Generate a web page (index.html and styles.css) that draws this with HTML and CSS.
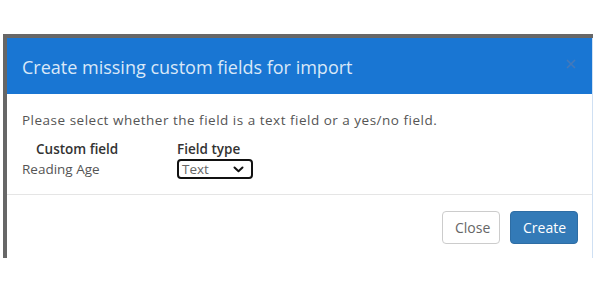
FILE: index.html
```html
<!DOCTYPE html>
<html>
	<head>
		<meta charset="utf-8"/>
		<title>Create missing custom fields</title>
		<link rel="stylesheet" href="styles.css">
	</head>
	<body>
		<div class="backdrop">
			<div class="modal">
				<div class="modalHeader">
					<h4 class="modalTitle">Create missing custom fields for import</h4>
					<svg class="closeX" width="10" height="10" viewBox="0 0 10 10"><path d="M1 1 L9 9 M9 1 L1 9" fill="none" stroke="#4479ba" stroke-width="1.6"/></svg>
				</div>
				<div class="modalBody">
					<p class="intro">Please select whether the field is a text field or a yes/no field.</p>
					<div class="fieldTable">
						<div class="colHead colName">Custom field</div>
						<div class="colHead">Field type</div>
						<div class="fieldName">Reading Age</div>
						<div class="selectBox">
							<span>Text</span>
							<svg width="11" height="7" viewBox="0 0 11 7"><path d="M1.5 1.5 L5.5 5.2 L9.5 1.5" fill="none" stroke="#111" stroke-width="2" stroke-linecap="round" stroke-linejoin="round"/></svg>
						</div>
					</div>
				</div>
				<div class="modalFooter">
					<button class="btn btnDefault">Close</button>
					<button class="btn btnPrimary">Create</button>
				</div>
			</div>
		</div>
	</body>
</html>
```

FILE: styles.css
```css
/*page*/
body{
	margin: 0;
	padding: 0;
	background: #fff;
	font-family: "Open Sans", "Noto Sans", sans-serif;
}
.backdrop{
	margin: 34px 0 0 3px;
	width: 586px;
	padding: 4px 0 0 4px;
	background: #676767;
}

/*dialog*/
.modal{
	width: 585px;
	background: #fff;
	border-right: 1px solid #cfe0f3;
}
.modalHeader{
	height: 56px;
	background: #1976d3;
	display: flex;
	align-items: center;
	justify-content: space-between;
	padding: 0 16px 0 15px;
}
.modalTitle{
	margin: 0;
	font-size: 18px;
	font-weight: 400;
	color: #d9e8f8;
	padding-top: 2px;
}
.closeX{
	margin-top: -4px;
}
.modalBody{
	height: 100px;
	padding: 0 15px;
	border-bottom: 1px solid #e5e5e5;
	color: #555;
	font-size: 13px;
}
.intro{
	margin: 0;
	padding-top: 17px;
	line-height: 18px;
	font-size: 13.5px;
	letter-spacing: 0.5px;
}
.fieldTable{
	display: grid;
	grid-template-columns: 155px auto;
	margin-top: 11px;
	line-height: 18px;
}
.colHead{
	color: #333;
	font-weight: 600;
	font-size: 13.5px;
	line-height: 18px;
}
.colName{
	padding-left: 14px;
}
.fieldName{
	padding-top: 2px;
	font-size: 13.5px;
}
.selectBox{
	height: 16px;
	width: 62px;
	margin-top: 1px;
	border: 2px solid #111;
	border-radius: 4px;
	display: flex;
	align-items: center;
	justify-content: space-between;
	padding: 0 7px 0 3px;
	color: #666;
	font-size: 13.5px;
}
.modalFooter{
	height: 63px;
	display: flex;
	justify-content: flex-end;
	align-items: flex-start;
	gap: 10px;
	padding: 16px 14px 0 0;
	box-sizing: border-box;
}
.btn{
	height: 33px;
	padding: 0 12px;
	font-family: "Open Sans", "Noto Sans", sans-serif;
	font-size: 14px;
	border-radius: 4px;
	border: 1px solid #ccc;
}
.btnDefault{
	background: #fff;
	color: #666;
	width: 58px;
}
.btnPrimary{
	background: #337ab7;
	border-color: #2e6da4;
	color: #fff;
	width: 68px;
}
```
